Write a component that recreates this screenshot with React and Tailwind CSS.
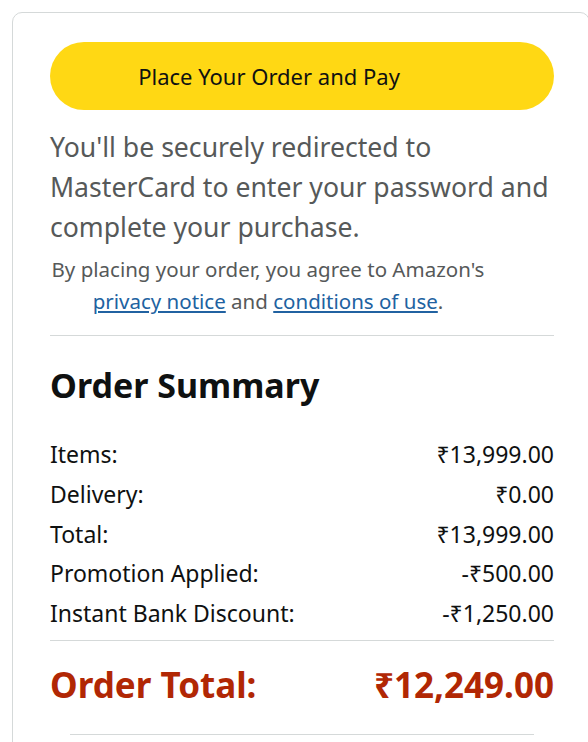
export default function App() {
  const rows = [
    ["Items:", "₹13,999.00"],
    ["Delivery:", "₹0.00"],
    ["Total:", "₹13,999.00"],
    ["Promotion Applied:", "-₹500.00"],
    ["Instant Bank Discount:", "-₹1,250.00"],
  ];
  return (
    <div className="min-h-[742px] w-[588px] bg-white overflow-hidden" style={{ fontFamily: '"Noto Sans", "Liberation Sans", sans-serif' }}>
      <div className="ml-[12px] mt-[12px] w-[578px] rounded-[10px] border border-[#d5d9d9] pl-[37px] pr-[35px] pt-[29px] h-[760px]">
        <button className="flex h-[68px] w-full items-center justify-center rounded-full bg-[#ffd814] pr-[66px] text-[22px] text-[#0f1111]">
          Place Your Order and Pay
        </button>
        <p className="mt-[17px] text-[26.6px] leading-[40px] text-[#565959]">
          You'll be securely redirected to MasterCard to enter your password and complete your purchase.
        </p>
        <p className="mt-[6px] mr-[68px] text-center text-[20.5px] leading-[32px] text-[#565959]">
          By placing your order, you agree to Amazon's{" "}
          <span className="text-[#2162a1] underline">privacy notice</span> and{" "}
          <span className="text-[#2162a1] underline">conditions of use</span>.
        </p>
        <div className="mt-[18px] h-px bg-[#d5d9d9]" />
        <h2 className="mt-[27px] text-[34px] font-bold leading-[44px] text-[#0f1111]">Order Summary</h2>
        <div className="mt-[28px] flex flex-col">
          {rows.map(([l, v]) => (
            <div key={l} className="flex justify-between text-[23px] leading-[39.75px] text-[#0f1111]">
              <span>{l}</span>
              <span>{v}</span>
            </div>
          ))}
        </div>
        <div className="mt-[6px] h-px bg-[#d5d9d9]" />
        <div className="mt-[22px] flex justify-between text-[35px] font-bold leading-[44px] text-[#b12704]">
          <span>Order Total:</span>
          <span>₹12,249.00</span>
        </div>
        <div className="mx-[20px] mt-[27px] h-px bg-[#d5d9d9]" />
      </div>
    </div>
  );
}
